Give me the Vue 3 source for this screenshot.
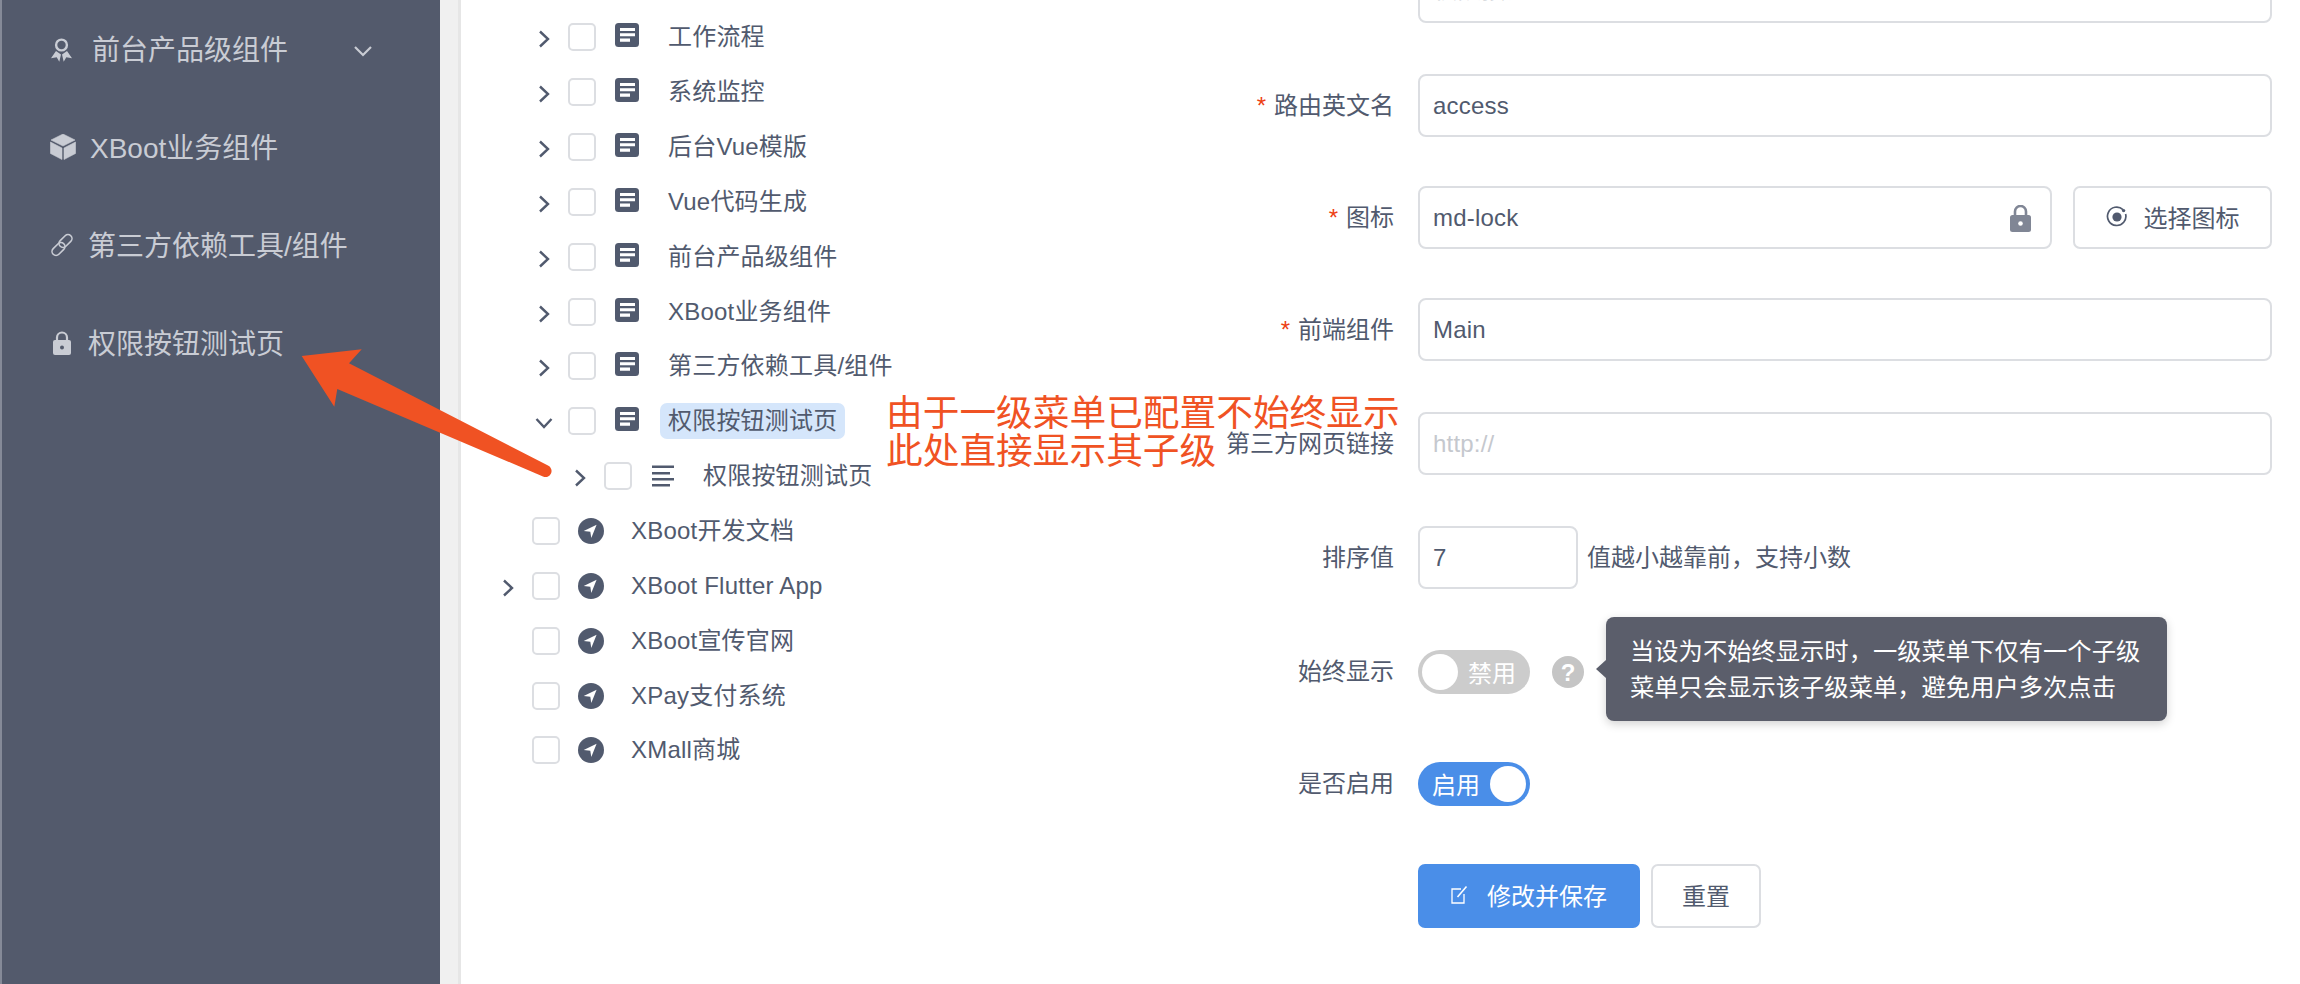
<template>
  <div class="page">
    <aside class="sidebar">
      <div class="side-item wide">
        <svg class="side-icon" width="24" height="26" viewBox="0 0 24 26">
          <circle cx="11.5" cy="9" r="5.4" fill="none" stroke="currentColor" stroke-width="2.4" />
          <path d="M6 15 1 22.3l5.7-1 2.6 4.4 1.7-7.2zM17 15l5 7.3-5.7-1-2.6 4.4-1.7-7.2z" fill="currentColor" />
        </svg>
        <span>前台产品级组件</span>
        <svg class="side-arrow" width="20" height="12" viewBox="0 0 20 12">
          <path d="M2 2l8 8 8-8" fill="none" stroke="currentColor" stroke-width="2.2" />
        </svg>
      </div>
      <div class="side-item">
        <svg class="side-icon" width="26" height="26" viewBox="0 0 26 26">
          <path d="M13 0 25 6 13 12 1 6zM.5 8 12 14v11.5L.5 19.5zM25.5 8 14 14v11.5l11.5-6z" fill="currentColor" stroke="currentColor" stroke-width=".6" stroke-linejoin="round" />
        </svg>
        <span>XBoot业务组件</span>
      </div>
      <div class="side-item">
        <svg class="side-icon" width="24" height="24" viewBox="0 0 24 24">
          <g fill="none" stroke="currentColor" stroke-width="1.6">
            <rect x="1" y="12" width="15" height="8" rx="4" transform="rotate(-45 8.5 16)" />
            <rect x="8" y="4" width="15" height="8" rx="4" transform="rotate(-45 15.5 8)" />
          </g>
        </svg>
        <span>第三方依赖工具/组件</span>
      </div>
      <div class="side-item">
        <svg class="side-icon" width="24" height="24" viewBox="0 0 24 24">
          <path d="M7 10V6.5a5 5 0 0 1 10 0V10" fill="none" stroke="currentColor" stroke-width="2.2" />
          <rect x="3" y="9" width="18" height="15" rx="2" fill="currentColor" />
          <circle cx="12" cy="16.5" r="2" fill="#535a6c" />
        </svg>
        <span>权限按钮测试页</span>
      </div>
    </aside>

    <div class="gutter"></div>

    <main class="content">
      <div class="tree">
        <div v-for="row in treeRows" :key="row.id" class="tree-row" :class="'level-' + row.level">
          <span class="expand">
            <svg v-if="row.arrow === 'right'" width="12" height="18" viewBox="0 0 12 18">
              <path d="M2 1.5 10 9l-8 7.5" fill="none" stroke="#515a6e" stroke-width="2.4" />
            </svg>
            <svg v-else-if="row.arrow === 'down'" width="18" height="12" viewBox="0 0 18 12">
              <path d="M1.5 2 9 10l7.5-8" fill="none" stroke="#515a6e" stroke-width="2.4" />
            </svg>
          </span>
          <span class="check"></span>
          <span class="node-icon">
            <svg v-if="row.icon === 'doc'" class="doc" width="24" height="24" viewBox="0 0 24 24">
              <rect width="24" height="24" rx="3.5" fill="#515a6e" />
              <path d="M5 5h15v3H5zM5 10.2h15v3H5zM5 15.6h10v3.2H5z" fill="#fff" />
            </svg>
            <svg v-else-if="row.icon === 'lines'" width="22" height="22" viewBox="0 0 22 22">
              <path d="M0 .5h22v2.6H0zM0 7h18v2.6H0zM0 13h22v2.6H0zM0 19h18v2.6H0z" fill="#515a6e" />
            </svg>
            <svg v-else width="26" height="26" viewBox="0 0 26 26">
              <circle cx="13" cy="13" r="13" fill="#515a6e" />
              <path d="M18.6 6.8 5.7 13l6.6.7 1 6.2z" fill="#fff" />
            </svg>
          </span>
          <span class="node-label" :class="{ selected: row.selected }">{{ row.label }}</span>
        </div>
      </div>

      <form class="form" @submit.prevent>
        <div class="form-row gap-wide clipped">
          <label class="form-label">名称</label>
          <input class="text-input" type="text" value="权限按钮" />
        </div>
        <div class="form-row">
          <label class="form-label"><i>*</i>路由英文名</label>
          <input class="text-input" type="text" value="access" />
        </div>
        <div class="form-row">
          <label class="form-label"><i>*</i>图标</label>
          <div class="icon-field">
            <input class="text-input" type="text" value="md-lock" />
            <svg class="lock-suffix" width="21" height="27" viewBox="0 0 21 27">
              <path d="M5 11V6.5a5.5 5.5 0 0 1 11 0V11" fill="none" stroke="#808695" stroke-width="2.6" />
              <rect y="10" width="21" height="17" rx="2.5" fill="#808695" />
              <circle cx="10.5" cy="18.5" r="2.3" fill="#fff" />
            </svg>
          </div>
          <button class="btn pick-btn" type="button">
            <svg width="22" height="22" viewBox="0 0 22 22">
              <path d="M17 3.6A9.2 9.2 0 1 0 19.6 8" fill="none" stroke="#515a6e" stroke-width="1.7" />
              <circle cx="11" cy="11" r="4.6" fill="#515a6e" />
              <circle cx="17.6" cy="4.6" r="1.7" fill="#515a6e" />
            </svg>
            选择图标
          </button>
        </div>
        <div class="form-row gap-wide">
          <label class="form-label"><i>*</i>前端组件</label>
          <input class="text-input" type="text" value="Main" />
        </div>
        <div class="form-row gap-wide">
          <label class="form-label">第三方网页链接</label>
          <input class="text-input" type="text" placeholder="http://" />
        </div>
        <div class="form-row gap-wide">
          <label class="form-label">排序值</label>
          <input class="text-input sort-input" type="text" value="7" />
          <span class="hint">值越小越靠前，支持小数</span>
        </div>
        <div class="form-row has-tip">
          <label class="form-label">始终显示</label>
          <span class="switch off"><b></b><em>禁用</em></span>
          <span class="help">?</span>
          <div class="tooltip">当设为不始终显示时，一级菜单下仅有一个子级菜单只会显示该子级菜单，避免用户多次点击</div>
        </div>
        <div class="form-row">
          <label class="form-label">是否启用</label>
          <span class="switch on"><em>启用</em><b></b></span>
        </div>
        <div class="form-row">
          <span class="form-label"></span>
          <button class="btn primary" type="button">
            <svg width="18" height="20" viewBox="0 0 18 20">
              <path d="M10 4H1v14h12V9" fill="none" stroke="#fff" stroke-width="1.3" />
              <path d="M6.5 12 15.5 1.5" fill="none" stroke="#fff" stroke-width="1.6" />
            </svg>
            修改并保存
          </button>
          <button class="btn reset" type="button">重置</button>
        </div>
      </form>
    </main>

    <!-- annotation drawn on top of the screenshot -->
    <svg class="arrow" width="270" height="140" viewBox="0 0 270 140">
      <path d="M11.7 16 71.7 9.3 59 23.3 258 125.5a6 6 0 0 1-5 11L47.3 49l-3 17.7z" fill="#f05223" />
    </svg>
    <div class="note">由于一级菜单已配置不始终显示<br />此处直接显示其子级</div>
  </div>
</template>

<script setup>
const treeRows = [
  { id: 1, label: "工作流程", level: 1, arrow: "right", icon: "doc" },
  { id: 2, label: "系统监控", level: 1, arrow: "right", icon: "doc" },
  { id: 3, label: "后台Vue模版", level: 1, arrow: "right", icon: "doc" },
  { id: 4, label: "Vue代码生成", level: 1, arrow: "right", icon: "doc" },
  { id: 5, label: "前台产品级组件", level: 1, arrow: "right", icon: "doc" },
  { id: 6, label: "XBoot业务组件", level: 1, arrow: "right", icon: "doc" },
  { id: 7, label: "第三方依赖工具/组件", level: 1, arrow: "right", icon: "doc" },
  { id: 8, label: "权限按钮测试页", level: 1, arrow: "down", icon: "doc", selected: true },
  { id: 9, label: "权限按钮测试页", level: 2, arrow: "right", icon: "lines" },
  { id: 10, label: "XBoot开发文档", level: 0, icon: "nav" },
  { id: 11, label: "XBoot Flutter App", level: 0, arrow: "right", icon: "nav" },
  { id: 12, label: "XBoot宣传官网", level: 0, icon: "nav" },
  { id: 13, label: "XPay支付系统", level: 0, icon: "nav" },
  { id: 14, label: "XMall商城", level: 0, icon: "nav" },
];
</script>

<style>
html,
body {
  overflow: hidden;
  background: #fff;
}
</style>

<style scoped>
.page {
  position: relative;
  display: flex;
  width: 2300px;
  height: 984px;
  overflow: hidden;
  background: #fff;
  color: #515a6e;
  font-family: "Liberation Sans", "Noto Sans CJK SC", sans-serif;
  font-size: 24px;
}

.sidebar {
  flex: 0 0 440px;
  box-sizing: border-box;
  border-left: 2px solid #858a98;
  background: #535a6c;
  color: #c9ccd4;
  font-size: 28px;
}

.side-item {
  display: flex;
  align-items: center;
  height: 98px;
  padding-left: 48px;
}

.side-item span {
  padding-bottom: 3px;
}

.side-icon {
  flex: none;
  margin-right: 14px;
}

.side-item.wide .side-icon {
  margin-right: 18px;
}

.side-arrow {
  margin-left: 65px;
  margin-top: 4px;
}

.gutter {
  flex: 0 0 18px;
  border-right: 3px solid #e6e6e6;
  background: #f0f0f0;
}

.content {
  display: flex;
  flex: 1;
}

.tree {
  flex: 0 0 740px;
  padding-top: 10px;
}

.tree-row {
  display: flex;
  align-items: center;
  height: 54.85px;
}

.level-0 {
  padding-left: 33px;
}

.level-1 {
  padding-left: 69px;
}

.level-2 {
  padding-left: 105px;
}

.expand {
  display: flex;
  flex: 0 0 28px;
  align-items: center;
  justify-content: center;
  margin-right: 10px;
  padding-top: 4px;
}

.check {
  flex: none;
  box-sizing: border-box;
  width: 28px;
  height: 28px;
  border: 2px solid #dcdee2;
  border-radius: 5px;
  background: #fff;
}

.node-icon {
  display: flex;
  flex: 0 0 26px;
  justify-content: center;
  margin-left: 18px;
}

.node-icon .doc {
  margin-top: -4px;
}

.node-label {
  margin-left: 20px;
  padding: 0 8px;
  border-radius: 7px;
  letter-spacing: 0.2px;
  line-height: 36px;
}

.level-0 .node-label,
.level-2 .node-label {
  margin-left: 19px;
}

.node-label.selected {
  background: #d5e6fb;
}

.form {
  flex: 1;
  margin-top: -40px;
  padding-right: 28px;
}

.form-row {
  position: relative;
  display: flex;
  align-items: center;
  height: 63px;
  margin-bottom: 49px;
}

.form-row.gap-wide {
  margin-bottom: 51px;
}

.form-label {
  flex: 0 0 193px;
  margin-right: 24px;
  padding-bottom: 4px;
  text-align: right;
}

.form-label i {
  margin-right: 8px;
  color: #ed4014;
  font-style: normal;
}

.clipped .form-label {
  padding-bottom: 10px;
}

.text-input {
  flex: 1;
  box-sizing: border-box;
  width: 100%;
  height: 63px;
  padding: 0 13px;
  border: 2px solid #dcdee2;
  border-radius: 8px;
  outline: none;
  background: #fff;
  color: #515a6e;
  font: inherit;
  letter-spacing: 0.2px;
}

.clipped .text-input {
  padding-bottom: 8px;
  color: #c5c8ce;
}

.text-input::placeholder {
  color: #c5c8ce;
}

.icon-field {
  position: relative;
  display: flex;
  flex: 1;
}

.lock-suffix {
  position: absolute;
  top: 19px;
  right: 21px;
}

.sort-input {
  flex: 0 0 160px;
  width: 160px;
}

.hint {
  margin-left: 9px;
  padding-bottom: 5px;
}

.btn {
  display: flex;
  align-items: center;
  justify-content: center;
  box-sizing: border-box;
  height: 64px;
  padding: 0 0 2px;
  border: 2px solid #dcdee2;
  border-radius: 7px;
  background: #fff;
  color: #515a6e;
  font: inherit;
  white-space: nowrap;
}

.pick-btn {
  flex: 0 0 199px;
  gap: 16px;
  height: 63px;
  margin-left: 21px;
}

.btn.primary {
  flex: 0 0 222px;
  gap: 18px;
  border-color: #4a8ee8;
  background: #4a8ee8;
  color: #fff;
}

.btn.reset {
  flex: 0 0 110px;
  margin-left: 11px;
}

.switch {
  display: flex;
  flex: none;
  align-items: center;
  box-sizing: border-box;
  width: 112px;
  height: 44px;
  padding: 0 4px;
  border-radius: 22px;
  color: #fff;
}

.switch b {
  flex: none;
  width: 36px;
  height: 36px;
  border-radius: 50%;
  background: #fff;
}

.switch em {
  flex: 1;
  font-style: normal;
  text-align: center;
}

.switch.off {
  background: #ccc;
}

.switch.on {
  background: #4a8ee8;
}

.help {
  flex: none;
  width: 32px;
  height: 32px;
  margin-left: 22px;
  border-radius: 50%;
  background: #c5c5c5;
  color: #fff;
  font-size: 24px;
  font-weight: 700;
  line-height: 33px;
  text-align: center;
}

.tooltip {
  position: absolute;
  top: -23px;
  left: 405px;
  box-sizing: border-box;
  width: 561px;
  height: 104px;
  padding: 17px 24px;
  border-radius: 8px;
  background: #5b5e6b;
  box-shadow: 0 3px 10px rgba(0, 0, 0, 0.18);
  color: #fff;
  font-size: 24.3px;
  line-height: 36px;
}

.tooltip::before {
  content: "";
  position: absolute;
  top: 43px;
  left: -10px;
  border-top: 9px solid transparent;
  border-right: 10px solid #5b5e6b;
  border-bottom: 9px solid transparent;
}

.arrow {
  position: absolute;
  top: 340px;
  left: 290px;
  pointer-events: none;
}

.note {
  position: absolute;
  top: 395px;
  left: 886px;
  color: #f05223;
  font-size: 36.7px;
  line-height: 38px;
  white-space: nowrap;
  pointer-events: none;
}
</style>
